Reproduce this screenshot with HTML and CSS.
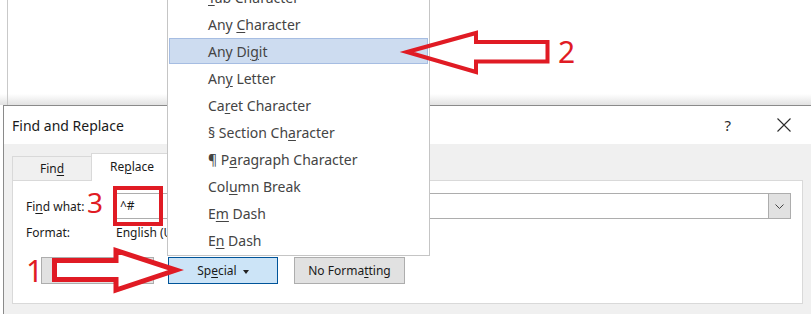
FILE: index.html
```html
<!DOCTYPE html>
<html lang="en">
<head>
    <meta charset="UTF-8">
    <meta name="viewport" content="width=device-width, initial-scale=1.0">
    <title>Find and Replace - Special</title>
    <link rel="stylesheet" href="styles.css">
</head>
<body>
    <div class="stage">
        <div class="doc"></div>

        <div class="dialog">
            <div class="titlebar">
                <span class="title">Find and Replace</span>
                <span class="help">?</span>
                <svg class="close" width="14" height="14" viewBox="0 0 14 14">
                    <path d="M0.5 0.5 L13.5 13.5 M13.5 0.5 L0.5 13.5" stroke="#2b2b2b" stroke-width="1.1" fill="none"/>
                </svg>
            </div>
            <div class="dialog-body">
                <div class="tabs">
                    <div class="tab">Fin<u>d</u></div>
                    <div class="tab active">Re<u>p</u>lace</div>
                    <div class="tab">Go To</div>
                </div>
                <div class="panel">
                    <div class="field-row">
                        <span class="field-label">Fi<u>n</u>d what:</span>
                        <div class="combo">
                            <span class="combo-text">^#</span>
                            <span class="combo-btn">
                                <svg width="9" height="5" viewBox="0 0 9 5">
                                    <path d="M0.5 0.5 L4.5 4.5 L8.5 0.5" fill="none" stroke="#444" stroke-width="1"/>
                                </svg>
                            </span>
                        </div>
                    </div>
                    <div class="field-row format-row">
                        <span class="field-label">Format:</span>
                        <span>English (United States)</span>
                    </div>
                    <div class="button-row">
                        <button class="btn btn-less">&lt;&lt; <u>L</u>ess</button>
                        <button class="btn btn-special">Sp<u>e</u>cial <span class="caret"></span></button>
                        <button class="btn btn-noformat">No Forma<u>t</u>ting</button>
                    </div>
                </div>
            </div>
        </div>

        <ul class="menu">
            <li><u>T</u>ab Character</li>
            <li>Any <u>C</u>haracter</li>
            <li class="selected">Any Di<u>g</u>it</li>
            <li>An<u>y</u> Letter</li>
            <li>Ca<u>r</u>et Character</li>
            <li>§ Section Ch<u>a</u>racter</li>
            <li>¶ P<u>a</u>ragraph Character</li>
            <li>Col<u>u</u>mn Break</li>
            <li>E<u>m</u> Dash</li>
            <li>E<u>n</u> Dash</li>
        </ul>

        <!-- annotation overlay -->
        <svg class="marks" width="811" height="314" viewBox="0 0 811 314">
            <polygon points="407,52 476,33 476,42 547.5,42 547.5,61.5 476,61.5 476,72"
                     fill="none" stroke="#e01b24" stroke-width="4"/>
            <polygon points="54.5,260.5 116,260.5 116,250.5 176,270 116,290 116,279.5 54.5,279.5"
                     fill="#fff" stroke="#e01b24" stroke-width="5"/>
        </svg>
        <div class="mark-box"></div>
        <span class="callout callout-1">1</span>
        <span class="callout callout-2">2</span>
        <span class="callout callout-3">3</span>
    </div>
</body>
</html>
```

FILE: styles.css
```css
* {
    box-sizing: border-box;
}

body {
    margin: 0;
    font-family: 'Noto Sans', sans-serif;
    background-color: #ffffff;
    overflow: hidden;
}

u {
    text-decoration: underline;
    text-decoration-thickness: 1px;
    text-underline-offset: 2px;
}

.stage {
    position: relative;
    width: 811px;
    height: 314px;
    overflow: hidden;
}

/* document behind the dialog */
.doc {
    height: 105px;
    background:
        linear-gradient(to right, transparent 7px, #c9c9c9 7px, #c9c9c9 8px, transparent 8px),
        linear-gradient(to bottom, #ffffff 94px, #e2e2e2 105px);
}

.dialog {
    margin-left: 3px;
    height: 209px;
    background-color: #f0f0f0;
    border-top: 1px solid #8a8a8a;
    border-left: 1px solid #8a8a8a;
}

.titlebar {
    height: 38px;
    display: flex;
    align-items: center;
    padding-left: 8px;
    background-color: #ffffff;
}

.title {
    flex: 1;
    font-size: 14px;
    color: #1a1a1a;
}

.help {
    font-size: 15px;
    color: #2b2b2b;
    margin-right: 46px;
}

.close {
    margin-right: 20px;
}

.dialog-body {
    padding: 9px 8px 0 8px;
}

.tabs {
    display: flex;
    align-items: flex-end;
    height: 27px;
    position: relative;
    z-index: 1;
}

.tab {
    width: 80px;
    height: 24px;
    padding-top: 1px;
    line-height: 22px;
    text-align: center;
    font-size: 12px;
    color: #1a1a1a;
    border: 1px solid #d9d9d9;
    border-bottom: none;
    background-color: #f0f0f0;
}

.tab + .tab {
    margin-left: -1px;
}

.tab.active {
    width: 82px;
    height: 28px;
    padding-top: 0;
    line-height: 26px;
    margin-bottom: -1px;
    background-color: #ffffff;
}

.panel {
    height: 124px;
    padding: 12px 11px 0 13px;
    background-color: #ffffff;
    border: 1px solid #d9d9d9;
}

.field-row {
    display: flex;
    align-items: center;
    font-size: 12px;
    color: #1a1a1a;
}

.field-label {
    width: 90px;
}

.combo {
    flex: 1;
    display: flex;
    height: 26px;
    border: 1px solid #adadad;
}

.combo-text {
    flex: 1;
    padding-left: 3px;
    line-height: 24px;
}

.combo-btn {
    width: 23px;
    margin: -1px -1px -1px 0;
    display: flex;
    align-items: center;
    justify-content: center;
    background-color: #e1e1e1;
    border: 1px solid #adadad;
}

.format-row {
    margin-top: 5px;
    line-height: 17px;
    white-space: nowrap;
}

.button-row {
    display: flex;
    margin-top: 16px;
}

.btn {
    height: 27px;
    padding: 0;
    font-family: inherit;
    font-size: 12px;
    color: #1a1a1a;
    background-color: #e1e1e1;
    border: 1px solid #adadad;
}

.btn-less {
    width: 113px;
    margin-left: 15px;
}

.btn-special {
    width: 110px;
    margin-left: 14px;
    background-color: #cce4f7;
    border-color: #005499;
}

.btn-noformat {
    width: 111px;
    margin-left: 16px;
}

.caret {
    display: inline-block;
    margin-left: 3px;
    vertical-align: middle;
    border-left: 3.5px solid transparent;
    border-right: 3.5px solid transparent;
    border-top: 4px solid #222;
}

/* Special dropdown menu */
.menu {
    position: absolute;
    z-index: 3;
    left: 167px;
    top: -17px;
    width: 263px;
    margin: 0;
    padding: 0 0 1px 0;
    list-style: none;
    font-size: 14px;
    color: #444;
    background-color: #ffffff;
    border: 1px solid #c5c5c5;
}

.menu li {
    height: 27px;
    line-height: 27px;
    padding-left: 40px;
    white-space: nowrap;
}

.menu li.selected {
    height: 26px;
    line-height: 25px;
    margin: 0 1px 1px 1px;
    padding-left: 38px;
    background-color: #cddcf0;
    border: 1px solid #a6bde2;
}

/* red annotations */
.marks {
    position: absolute;
    z-index: 4;
    left: 0;
    top: 0;
    pointer-events: none;
}

.mark-box {
    position: absolute;
    z-index: 4;
    left: 113px;
    top: 186px;
    width: 50px;
    height: 40px;
    border: 4px solid #e01b24;
}

.callout {
    position: absolute;
    z-index: 4;
    font-size: 30px;
    line-height: 30px;
    color: #e01b24;
}

.callout-1 {
    left: 26px;
    top: 256px;
}

.callout-2 {
    left: 558px;
    top: 37px;
}

.callout-3 {
    left: 87px;
    top: 188px;
    font-size: 28px;
    line-height: 28px;
}
```
